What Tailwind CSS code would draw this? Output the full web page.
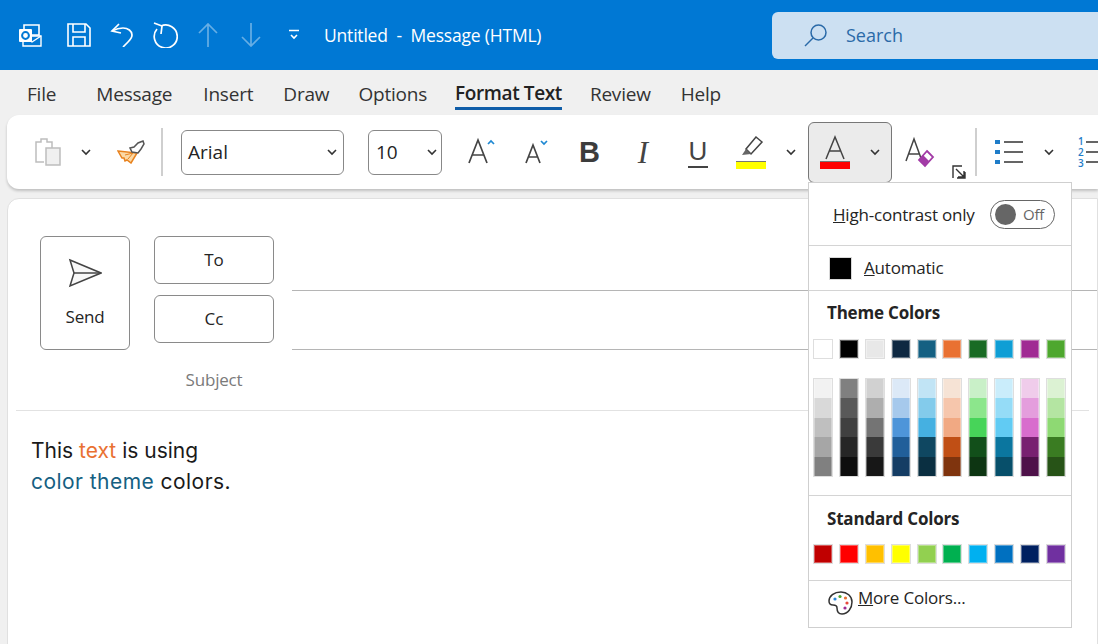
<!DOCTYPE html>
<html lang="en">
<head>
<meta charset="UTF-8" />
<title>Untitled - Message (HTML)</title>
<script src="https://cdn.jsdelivr.net/npm/@tailwindcss/browser@4"></script>
</head>
<body class="relative w-[1098px] h-[644px] overflow-hidden bg-[#f0f0f0] font-['Open_Sans','Noto_Sans',sans-serif] text-[#242424]">

  <!-- Title bar -->
  <header class="h-[70px] bg-[#0078d4] flex items-center text-white">
    <svg class="ml-[18px] w-6 h-6 shrink-0" viewBox="0 0 24 24"><path d="M6 2h15v10H6z" fill="none" stroke="#fff" stroke-width="1.6"/><path d="M5 13h18v10H5z" fill="#0078d4" stroke="#fff" stroke-width="1.4"/><path d="M5 13l9 6 9-6" fill="none" stroke="#fff" stroke-width="1.4"/><rect x="1" y="6" width="13" height="13" rx="1" fill="#fff"/><circle cx="7.5" cy="12.5" r="3.4" fill="none" stroke="#0078d4" stroke-width="2"/></svg>
    <svg class="ml-[25px] w-6 h-6 shrink-0" viewBox="0 0 24 24" fill="none" stroke="#fff" stroke-width="1.6"><path d="M1 1h18l4 4v18H1z"/><path d="M6 1v8h12V1M6 23v-9h12v9"/></svg>
    <svg class="ml-[19px] w-6 h-6 shrink-0" viewBox="0 0 24 24" fill="none" stroke="#fff" stroke-width="1.7"><path d="M9 1L2 8l9 2"/><path d="M2 8c4-2 7-3 11-3 5 0 9 3 9 7 0 3-2 5-4 7l-5 5"/></svg>
    <svg class="ml-[18px] w-[26px] h-[26px] shrink-0" viewBox="0 0 26 26" fill="none" stroke="#fff" stroke-width="1.7"><path d="M2 1l8 3-1 8"/><path d="M9 4a11.500 11.500 0 1 1-4 3"/></svg>
    <svg class="ml-[18px] w-6 h-6 shrink-0 opacity-40" viewBox="0 0 24 24" fill="none" stroke="#fff" stroke-width="1.7"><path d="M12 24V1M3 10l9-9 9 9"/></svg>
    <svg class="ml-[19px] w-6 h-6 shrink-0 opacity-40" viewBox="0 0 24 24" fill="none" stroke="#fff" stroke-width="1.7"><path d="M12 0v23M3 14l9 9 9-9"/></svg>
    <svg class="ml-[25px] w-3 h-3 shrink-0" viewBox="0 0 12 12" fill="none" stroke="#fff" stroke-width="1.6"><path d="M1 1.500h10M3 6l3 3 3-3"/></svg>
    <span class="ml-[24px] w-[448px] shrink-0 text-[17.500px] tracking-[-0.2px] whitespace-pre">Untitled  -  Message (HTML)</span>
    <div class="flex-1 h-[47px] bg-[#cce0f2] rounded-l-md flex items-center">
      <svg class="ml-[32px] w-6 h-6 shrink-0" viewBox="0 0 24 24" fill="none" stroke="#2a6aa8" stroke-width="1.5"><circle cx="14.500" cy="9.500" r="7.500"/><path d="M9 15l-8 8"/></svg>
      <span class="ml-[18px] text-[18px] text-[#2a6aa8]">Search</span>
    </div>
  </header>

  <!-- Tabs -->
  <nav class="h-[45px] pt-[3px] flex items-center text-[19px] tracking-[-0.2px] text-[#333]">
    <span class="ml-[27px]">File</span>
    <span class="ml-[40px]">Message</span>
    <span class="ml-[31px]">Insert</span>
    <span class="ml-[30px]">Draw</span>
    <span class="ml-[29px]">Options</span>
    <span class="ml-[28px] font-semibold tracking-[-0.4px] border-b-[3px] border-[#0f5da8] text-[#222] leading-[27px] mt-[2px]">Format Text</span>
    <span class="ml-[28px]">Review</span>
    <span class="ml-[30px]">Help</span>
  </nav>

  <!-- Ribbon -->
  <section class="ml-[7px] h-[74px] bg-white rounded-l-xl shadow-[0_2px_3px_rgba(0,0,0,0.2)] flex items-center">
    <svg class="ml-[27px] w-7 h-7 shrink-0" viewBox="0 0 28 28" fill="none" stroke="#bdbdbd" stroke-width="1.5"><path d="M10 24H2V4h5V1h6v3h5v6"/><rect x="12" y="10" width="14" height="17" fill="#f0f0f0"/></svg>
    <svg class="ml-[18px] w-3 h-3 shrink-0" viewBox="0 0 12 12" fill="none" stroke="#333" stroke-width="1.6"><path d="M2 4l4 4 4-4"/></svg>
    <svg class="ml-[25px] w-7 h-6 shrink-0" viewBox="0 0 28 24" fill="none"><path d="M1 11l19 2-6 10-4-3-2 1-1-3-2 0z" fill="#fbd9a6" stroke="#e8821e" stroke-width="1.500"/><path d="M8 15l8-2M11 19l5-6" stroke="#e8821e" stroke-width="1"/><path d="M13 8l4-1 4-4 5-2 1 3-3 5-3 4-6-1z" fill="#fff" stroke="#555" stroke-width="1.500"/></svg>
    <div class="ml-[16px] w-[2px] h-[48px] bg-[#cfcfcf] shrink-0"></div>
    <div class="ml-[18px] w-[163px] h-[45px] shrink-0 border border-[#888] rounded-md flex items-center justify-between pl-[6px] pr-[5px] text-[19px]">Arial
      <svg class="w-3 h-3" viewBox="0 0 12 12" fill="none" stroke="#333" stroke-width="1.6"><path d="M2 4l4 4 4-4"/></svg>
    </div>
    <div class="ml-[24px] w-[74px] h-[45px] shrink-0 border border-[#888] rounded-md flex items-center justify-between pl-[7px] pr-[3px] text-[19px]">10
      <svg class="w-3 h-3" viewBox="0 0 12 12" fill="none" stroke="#333" stroke-width="1.6"><path d="M2 4l4 4 4-4"/></svg>
    </div>
    <!-- Grow font -->
    <svg class="ml-[25px] w-[30px] h-[30px] shrink-0" viewBox="0 0 30 30" fill="none"><path d="M2 26L11 3l9 23M5 18h12" stroke="#444" stroke-width="1.7"/><path d="M21 7l3-3 3 3" stroke="#1e88d2" stroke-width="1.7"/></svg>
    <!-- Shrink font -->
    <svg class="ml-[27px] w-[30px] h-[30px] shrink-0" viewBox="0 0 30 30" fill="none"><path d="M2 26l7-18 7 18M4.500 20h9" stroke="#444" stroke-width="1.700"/><path d="M17 4l3 3 3-3" stroke="#1e88d2" stroke-width="1.700"/></svg>
    <span class="ml-[25px] w-[20px] shrink-0 font-['Liberation_Sans',sans-serif] font-bold text-[29px] leading-none text-[#3c3c3c]">B</span>
    <span class="ml-[37px] w-[14px] shrink-0 flex justify-center font-['Liberation_Serif',serif] italic text-[31px] leading-none text-[#444]">I</span>
    <span class="ml-[38px] w-[20px] shrink-0 flex justify-center font-['Liberation_Sans',sans-serif] text-[26px] leading-[29px] text-[#444] border-b-2 border-[#444]">U</span>
    <!-- Highlight -->
    <div class="ml-[28px] w-[30px] shrink-0 flex flex-col items-center">
      <svg class="w-7 h-[24px]" viewBox="0 0 28 24" fill="none"><path d="M19 1l6 5-11 12-5-5z" stroke="#444" stroke-width="1.500"/><path d="M9 13l-4 6 9-1z" fill="#666"/></svg>
      <div class="w-[30px] h-[8px] bg-[#ffff00] border-t border-[#777] mt-[1px]"></div>
    </div>
    <svg class="ml-[19px] w-3 h-3 shrink-0" viewBox="0 0 12 12" fill="none" stroke="#333" stroke-width="1.6"><path d="M2 4l4 4 4-4"/></svg>
    <!-- Font colour, pressed -->
    <div class="ml-[11px] w-[84px] h-[61px] bg-[#ebebeb] border border-[#777] rounded-md flex items-center shrink-0">
      <div class="ml-[11px] w-[30px] flex flex-col items-center">
        <svg class="w-6 h-[25px]" viewBox="0 0 24 25" fill="none"><path d="M3 24L12 2l9 22M6 16h12" stroke="#444" stroke-width="1.500"/></svg>
        <div class="w-[30px] h-[8px] bg-[#ff0000] border-t border-[#777] mt-[1px]"></div>
      </div>
      <svg class="ml-[19px] w-3 h-3" viewBox="0 0 12 12" fill="none" stroke="#333" stroke-width="1.6"><path d="M2 4l4 4 4-4"/></svg>
    </div>
    <!-- Clear formatting -->
    <svg class="ml-[13px] w-[30px] h-[32px] shrink-0" viewBox="0 0 30 32" fill="none"><path d="M1 25L9 3l8 22M4 18h10" stroke="#444" stroke-width="1.500"/><path d="M22 15l6 6-8 9-6-6z" stroke="#a23ba6" stroke-width="1.800"/><path d="M18 19l6 6-4 5-6-6z" fill="#a23ba6"/></svg>
    <svg class="ml-[17px] mt-[39px] w-[14px] h-[14px] shrink-0" viewBox="0 0 14 14" fill="none" stroke="#333" stroke-width="1.400"><path d="M10 1H1v12"/><path d="M4 4l8 8M12 6v6H6M5 13h8V7"/></svg>
    <div class="ml-[9px] w-[2px] h-[48px] bg-[#cfcfcf] shrink-0"></div>
    <!-- Bullets -->
    <svg class="ml-[18px] w-7 h-6 shrink-0" viewBox="0 0 28 24"><path d="M0 0h5v4H0zM0 10h5v4H0zM0 20h5v4H0z" fill="#1e7cc8"/><path d="M9 2h19M9 12h19M9 22h19" stroke="#333" stroke-width="1.500"/></svg>
    <svg class="ml-[20px] w-3 h-3 shrink-0" viewBox="0 0 12 12" fill="none" stroke="#333" stroke-width="1.6"><path d="M2 4l4 4 4-4"/></svg>
    <div class="ml-[23px] flex flex-col text-[#1e7cc8] text-[10px] leading-[11px] font-semibold shrink-0"><span>1</span><span>2</span><span>3</span></div>
    <svg class="ml-[2px] w-4 h-6 shrink-0" viewBox="0 0 16 24"><path d="M0 2h16M0 12h16M0 22h16" stroke="#333" stroke-width="1.500"/></svg>
  </section>

  <!-- Message card -->
  <main class="mt-[9px] ml-[7px] h-[460px] bg-white border border-[#e0e0e0] rounded-tl-xl">
    <div class="flex pt-[37px] pl-[32px]">
      <div class="w-[90px] h-[114px] border border-[#8a8a8a] rounded-md flex flex-col items-center pt-[21px]">
        <svg class="w-[34px] h-[30px]" viewBox="0 0 34 30" fill="none" stroke="#444" stroke-width="1.500"><path d="M2 2l31 13L2 28l4-13z" fill="#f8f8f8"/><path d="M6 15h27"/></svg>
        <span class="mt-[16px] text-[17px] tracking-[-0.2px]">Send</span>
      </div>
      <div class="ml-[24px] w-[120px]">
        <div class="h-[48px] border border-[#8a8a8a] rounded-md flex items-center justify-center text-[17px]">To</div>
        <div class="mt-[11px] h-[48px] border border-[#8a8a8a] rounded-md flex items-center justify-center text-[17px]">Cc</div>
        <div class="mt-[25px] text-center text-[17px] leading-[24px] tracking-[-0.2px] text-[#7a7a7a]">Subject</div>
      </div>
      <div class="ml-[18px] flex-1">
        <div class="h-[55px] border-b border-[#b5b5b5]"></div>
        <div class="h-[59px] border-b border-[#b5b5b5]"></div>
      </div>
    </div>
    <div class="mt-[18px] mx-[8px] border-t border-[#e2e2e2]"></div>
    <div class="mt-[24px] ml-[23px] font-['Inter',sans-serif] text-[21px] leading-[31px] text-[#1a1a1a]">
      <div>This <span class="text-[#e97132]">text</span> is using</div>
      <div class="tracking-[0.45px]"><span class="text-[#156082]">color theme</span> colors.</div>
    </div>
  </main>

  <!-- Font colour dropdown -->
  <div class="absolute left-[808px] top-[182px] w-[264px] h-[446px] bg-white border border-[#cfcfcf] z-10 text-[17px] tracking-[-0.2px]">
    <div class="h-[63px] border-b border-[#d4d4d4] flex items-center pt-[1px]">
      <span class="ml-[24px] w-[157px] shrink-0"><u>H</u>igh-contrast only</span>
      <div class="w-[65px] h-[29px] shrink-0 border border-[#666] rounded-full flex items-center pl-[4px]">
        <div class="w-[21px] h-[21px] rounded-full bg-[#666]"></div>
        <span class="ml-[7px] text-[15px] text-[#666]">Off</span>
      </div>
    </div>
    <div class="h-[45px] border-b border-[#d4d4d4] flex items-center">
      <div class="ml-[20px] w-[23px] h-[23px] bg-black border border-[#d8d8d8]"></div>
      <span class="ml-[12px]"><u>A</u>utomatic</span>
    </div>
    <div class="h-[205px] border-b border-[#d4d4d4] pt-[10px]">
      <div class="ml-[18px] font-bold leading-[24px]">Theme Colors</div>
      <div id="themeRow" class="ml-[4px] mt-[14px] w-[253px] flex justify-between"></div>
      <div id="shadeRow" class="ml-[4px] mt-[19px] w-[253px] flex justify-between"></div>
    </div>
    <div class="h-[85px] border-b border-[#d4d4d4] pt-[11px]">
      <div class="ml-[18px] font-bold leading-[24px]">Standard Colors</div>
      <div id="standardRow" class="ml-[4px] mt-[13px] w-[253px] flex justify-between"></div>
    </div>
    <div class="flex items-start pt-[5px]">
      <svg class="ml-[19px] mt-[4px] w-[25px] h-[25px] shrink-0" viewBox="0 0 25 25" fill="none"><path d="M13 2C6 2 1 6 1 11c0 3 2 4 4 4 3 0 4 1 4 3 0 3 1 6 5 6 6 0 10-6 10-12C24 6 19 2 13 2z" stroke="#333" stroke-width="1.500"/><circle cx="7" cy="9" r="1.600" fill="#2b88d8"/><circle cx="12" cy="6.500" r="1.600" fill="#4ea72e"/><circle cx="17.500" cy="8" r="1.600" fill="#e97132"/><circle cx="19" cy="13" r="1.600" fill="#e8483c"/><circle cx="17" cy="18" r="1.600" fill="#a02b93"/></svg>
      <span class="ml-[5px] leading-[24px]"><u>M</u>ore Colors...</span>
    </div>
  </div>

  <script>
    // palette data for the dropdown
    const theme = ['#ffffff','#000000','#e8e8e8','#0e2841','#156082','#e97132','#196b24','#0f9ed5','#a02b93','#4ea72e'];
    const shades = [
      ['#f2f2f2','#d9d9d9','#bfbfbf','#a6a6a6','#808080'],
      ['#808080','#595959','#404040','#262626','#0d0d0d'],
      ['#d1d1d1','#aeaeae','#747474','#3a3a3a','#171717'],
      ['#dce9f7','#a6c9ec','#4e95d9','#215f9a','#153d64'],
      ['#c1e4f5','#83cbeb','#45b0e1','#0f4761','#0a2f41'],
      ['#f6e3d5','#f6c6ac','#f1a983','#c04f15','#7f340e'],
      ['#c9f0c8','#8ce68c','#47d459','#124f1a','#0d3512'],
      ['#caedfb','#95dcf7','#61cbf3','#0b769f','#074f6a'],
      ['#f0cceb','#e49edd','#d86dcd','#782170','#4e1149'],
      ['#dcf2d3','#b4e5a2','#8ed973','#3a7c22','#275317'],
    ];
    const standard = ['#c00000','#ff0000','#ffc000','#ffff00','#92d050','#00b050','#00b0f0','#0070c0','#002060','#7030a0'];

    function swatchRow(id, colors) {
      document.getElementById(id).innerHTML = colors.map(c =>
        `<div class="w-5 h-5 border border-[#dedede] shadow-[inset_0_0_0_1px_rgba(255,255,255,0.35)]" style="background:${c}"></div>`
      ).join('');
    }
    swatchRow('themeRow', theme);
    swatchRow('standardRow', standard);

    document.getElementById('shadeRow').innerHTML = shades.map(col =>
      `<div class="w-5 h-[99px] border border-[#dedede] flex flex-col">` +
      col.map(c => `<div class="flex-1 shadow-[inset_1px_0_0_rgba(255,255,255,0.35),inset_-1px_0_0_rgba(255,255,255,0.35)]" style="background:${c}"></div>`).join('') +
      `</div>`
    ).join('');
  </script>
</body>
</html>
